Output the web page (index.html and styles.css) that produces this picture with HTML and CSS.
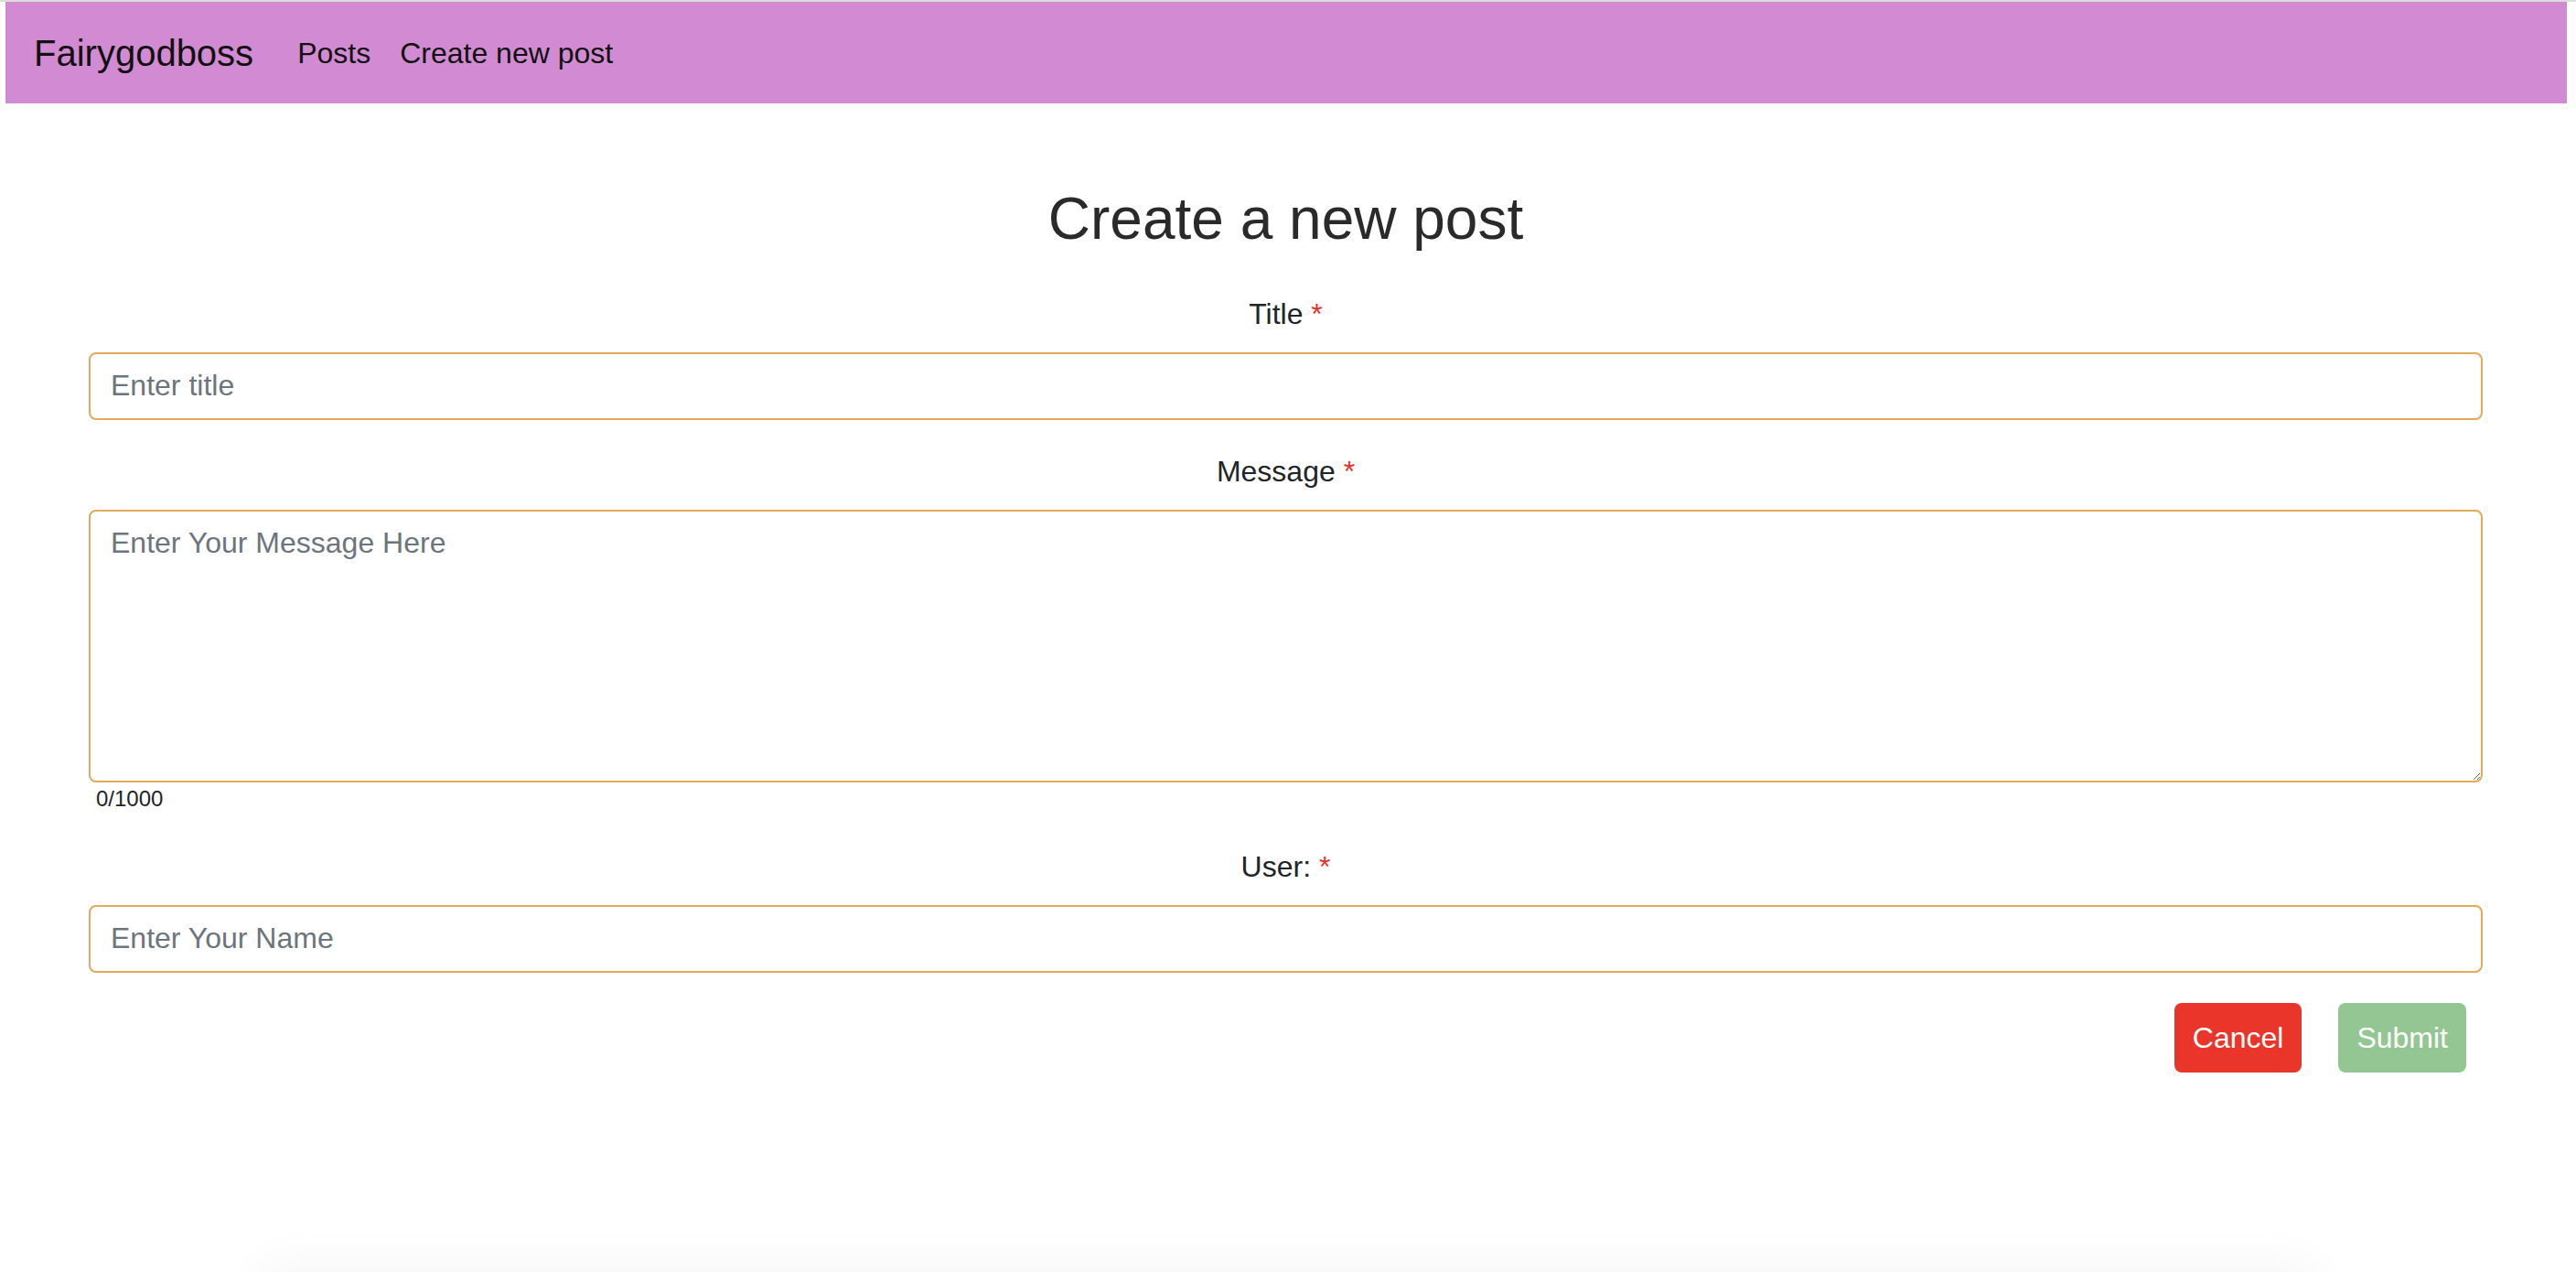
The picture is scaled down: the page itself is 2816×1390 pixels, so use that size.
FILE: index.html
```html
<!DOCTYPE html>
<html lang="en">
<head>
<meta charset="utf-8">
<title>Fairygodboss - Create a new post</title>
<link rel="stylesheet" href="styles.css">
</head>
<body>
<div class="topline"></div>
<nav class="navbar">
  <a class="brand" href="#">Fairygodboss</a>
  <a class="nav-link" href="#">Posts</a>
  <a class="nav-link" href="#">Create new post</a>
</nav>
<main class="page">
  <h2 class="page-title">Create a new post</h2>
  <form class="post-form">
    <div class="field">
      <label class="field-label" for="title">Title <span class="req">*</span></label>
      <input class="control" id="title" type="text" placeholder="Enter title">
    </div>
    <div class="field">
      <label class="field-label" for="message">Message <span class="req">*</span></label>
      <textarea class="control control-area" id="message" placeholder="Enter Your Message Here"></textarea>
      <div class="counter">0/1000</div>
    </div>
    <div class="field">
      <label class="field-label" for="user">User: <span class="req">*</span></label>
      <input class="control" id="user" type="text" placeholder="Enter Your Name">
    </div>
    <div class="actions">
      <button type="button" class="btn btn-cancel">Cancel</button>
      <button type="submit" class="btn btn-submit" disabled>Submit</button>
    </div>
  </form>
</main>
<div class="bottom-shadow"></div>
</body>
</html>
```
FILE: styles.css
```css
html, body {
  margin: 0;
  padding: 0;
  background: #fff;
}
body {
  font-family: "Liberation Sans", Arial, Helvetica, sans-serif;
  color: #212529;
  overflow: hidden;
}
.topline {
  height: 2px;
  background: #dcdcdc;
}
.navbar {
  margin: 0 10px 0 6px;
  height: 111px;
  padding: 0 32px 0 31px;
  background: #d28bd2;
  display: flex;
  align-items: center;
}
.brand {
  font-size: 40px;
  line-height: 60px;
  color: #111;
  text-decoration: none;
  margin-right: 32px;
}
.nav-link {
  font-size: 32px;
  line-height: 48px;
  padding: 0 16px;
  color: #111;
  text-decoration: none;
}
.page {
  margin: 0 10px 0 5px;
  padding: 88px 92px 0;
}
.page-title {
  margin: 0 0 41px;
  font-size: 64px;
  font-weight: 400;
  line-height: 1.2;
  text-align: center;
  color: #2a2a2a;
}
.post-form {
  margin: 0;
}
.field {
  margin-bottom: 32px;
}
.field-label {
  display: block;
  text-align: center;
  font-size: 32px;
  line-height: 48px;
  margin-bottom: 18px;
  color: #212529;
}
.req {
  color: #e8302a;
}
.control {
  display: block;
  box-sizing: border-box;
  width: 100%;
  height: 74px;
  margin: 0;
  padding: 0 22px;
  border: 2px solid #e4a95b;
  border-radius: 8px;
  background: #fff;
  font-family: "Liberation Sans", Arial, Helvetica, sans-serif;
  font-size: 32px;
  line-height: 48px;
  color: #495057;
  outline: none;
}
.control::placeholder {
  color: #6c757d;
  opacity: 1;
}
.control-area {
  height: 298px;
  padding: 10px 22px;
  resize: vertical;
}
.counter {
  font-size: 24px;
  line-height: 36px;
  padding-left: 8px;
  color: #212529;
}
.actions {
  display: flex;
  justify-content: flex-end;
  gap: 40px;
  margin-top: 33px;
  padding-right: 18px;
}
.btn {
  height: 76px;
  padding: 0 20px;
  border: none;
  border-radius: 8px;
  font-family: "Liberation Sans", Arial, Helvetica, sans-serif;
  font-size: 32px;
  line-height: 48px;
  color: #fff;
}
.btn-cancel {
  background: #e9352a;
}
.btn-submit {
  background: #93c692;
}
.bottom-shadow {
  position: fixed;
  left: 300px;
  right: 300px;
  top: 1400px;
  height: 60px;
  background: #fff;
  box-shadow: 0 0 60px 10px rgba(0, 0, 0, 0.06);
}
```
